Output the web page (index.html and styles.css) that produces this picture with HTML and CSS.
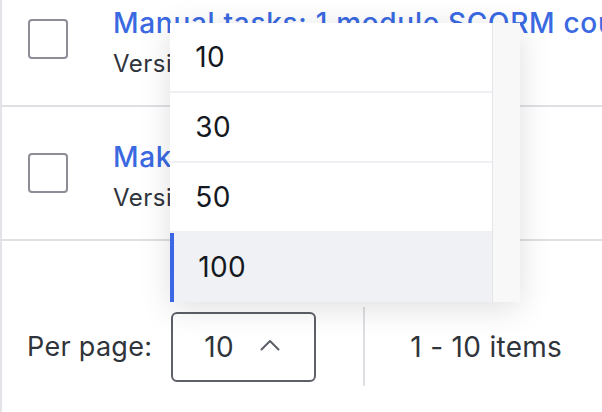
FILE: index.html
```html
<!DOCTYPE html>
<html lang="en">
<head>
<meta charset="utf-8">
<title>Items</title>
<link rel="stylesheet" href="styles.css">
</head>
<body>
<div class="page">
  <div class="list">
    <div class="row">
      <span class="checkbox"></span>
      <div class="info">
        <a class="title">Manual tasks: 1 module SCORM course</a>
        <div class="sub">Version 1</div>
      </div>
    </div>
    <div class="row">
      <span class="checkbox"></span>
      <div class="info">
        <a class="title">Make a course with feature</a>
        <div class="sub">Version 1</div>
      </div>
    </div>
  </div>
  <div class="footer">
    <span class="label">Per page:</span>
    <div class="select">
      <span class="value">10</span>
      <svg class="chev" width="20" height="12" viewBox="0 0 20 12"><polyline points="1.5,10.5 10,2 18.5,10.5" fill="none" stroke="#5b5f67" stroke-width="2" stroke-linecap="round" stroke-linejoin="round"/></svg>
      <div class="menu">
        <div class="options">
          <div class="opt">10</div>
          <div class="opt">30</div>
          <div class="opt">50</div>
          <div class="opt active">100</div>
        </div>
        <div class="track"></div>
      </div>
    </div>
    <span class="divider"></span>
    <span class="count">1 - 10 items</span>
  </div>
</div>
</body>
</html>
```
FILE: styles.css
```css
html, body {
  margin: 0;
  padding: 0;
  background: #ffffff;
  overflow: hidden;
}
body {
  font-family: Inter, "Noto Sans", "Liberation Sans", sans-serif;
  width: 602px;
  height: 412px;
}
.page {
  display: flow-root;
  border-left: 2px solid #e2e4e8;
  height: 412px;
  box-sizing: border-box;
}
.list {
  margin-top: -27px;
}
.row {
  display: flex;
  align-items: center;
  height: 132px;
  border-bottom: 2px solid #dfe0e4;
  padding-left: 26px;
  white-space: nowrap;
  overflow: hidden;
}
.checkbox {
  flex: none;
  width: 36px;
  height: 36px;
  border: 2px solid #8f8c98;
  border-radius: 4px;
}
.info {
  margin-left: 45px;
  padding-top: 7px;
  display: flex;
  flex-direction: column;
  gap: 8px;
}
.title {
  color: #3a69e2;
  font-size: 28px;
  font-weight: 500;
  letter-spacing: 0.7px;
  line-height: 34px;
}
.sub {
  color: #30343b;
  font-size: 24px;
  letter-spacing: 0.5px;
  line-height: 32px;
}
.footer {
  display: flex;
  align-items: center;
  height: 79px;
  margin-top: 66px;
  padding-left: 25px;
  color: #30343b;
  font-size: 27px;
  letter-spacing: 0.3px;
}
.label {
  margin-right: 19px;
}
.select {
  position: relative;
  display: flex;
  align-items: center;
  flex: none;
  box-sizing: border-box;
  width: 145px;
  height: 70px;
  border: 2px solid #5d6068;
  border-radius: 6px;
  padding-left: 31px;
  font-size: 28px;
}
.value {
  width: 56px;
}
.chev {
  margin-top: -4px;
}
.divider {
  align-self: stretch;
  width: 2px;
  background: #dddfe3;
  margin: 0 45px 0 47px;
}
.count {
  font-size: 28px;
}
.menu {
  position: absolute;
  left: -3px;
  bottom: 78px;
  width: 350px;
  height: 279px;
  display: flex;
  background: #ffffff;
  box-shadow: 0 6px 30px rgba(0, 0, 0, 0.13);
  z-index: 5;
  letter-spacing: 0.3px;
}
.options {
  width: 322px;
  border-right: 1px solid #e6e6ea;
  display: flex;
  flex-direction: column;
}
.opt {
  height: 68px;
  display: flex;
  align-items: center;
  padding-left: 25px;
  border-bottom: 2px solid #f0f0f4;
  color: #141821;
  font-size: 28px;
}
.opt.active {
  flex: 1;
  border-bottom: none;
  background: #f0f1f5;
  border-left: 4px solid #3b66e4;
  padding-left: 24px;
}
.track {
  flex: 1;
  background: #f8f8f9;
}
```
